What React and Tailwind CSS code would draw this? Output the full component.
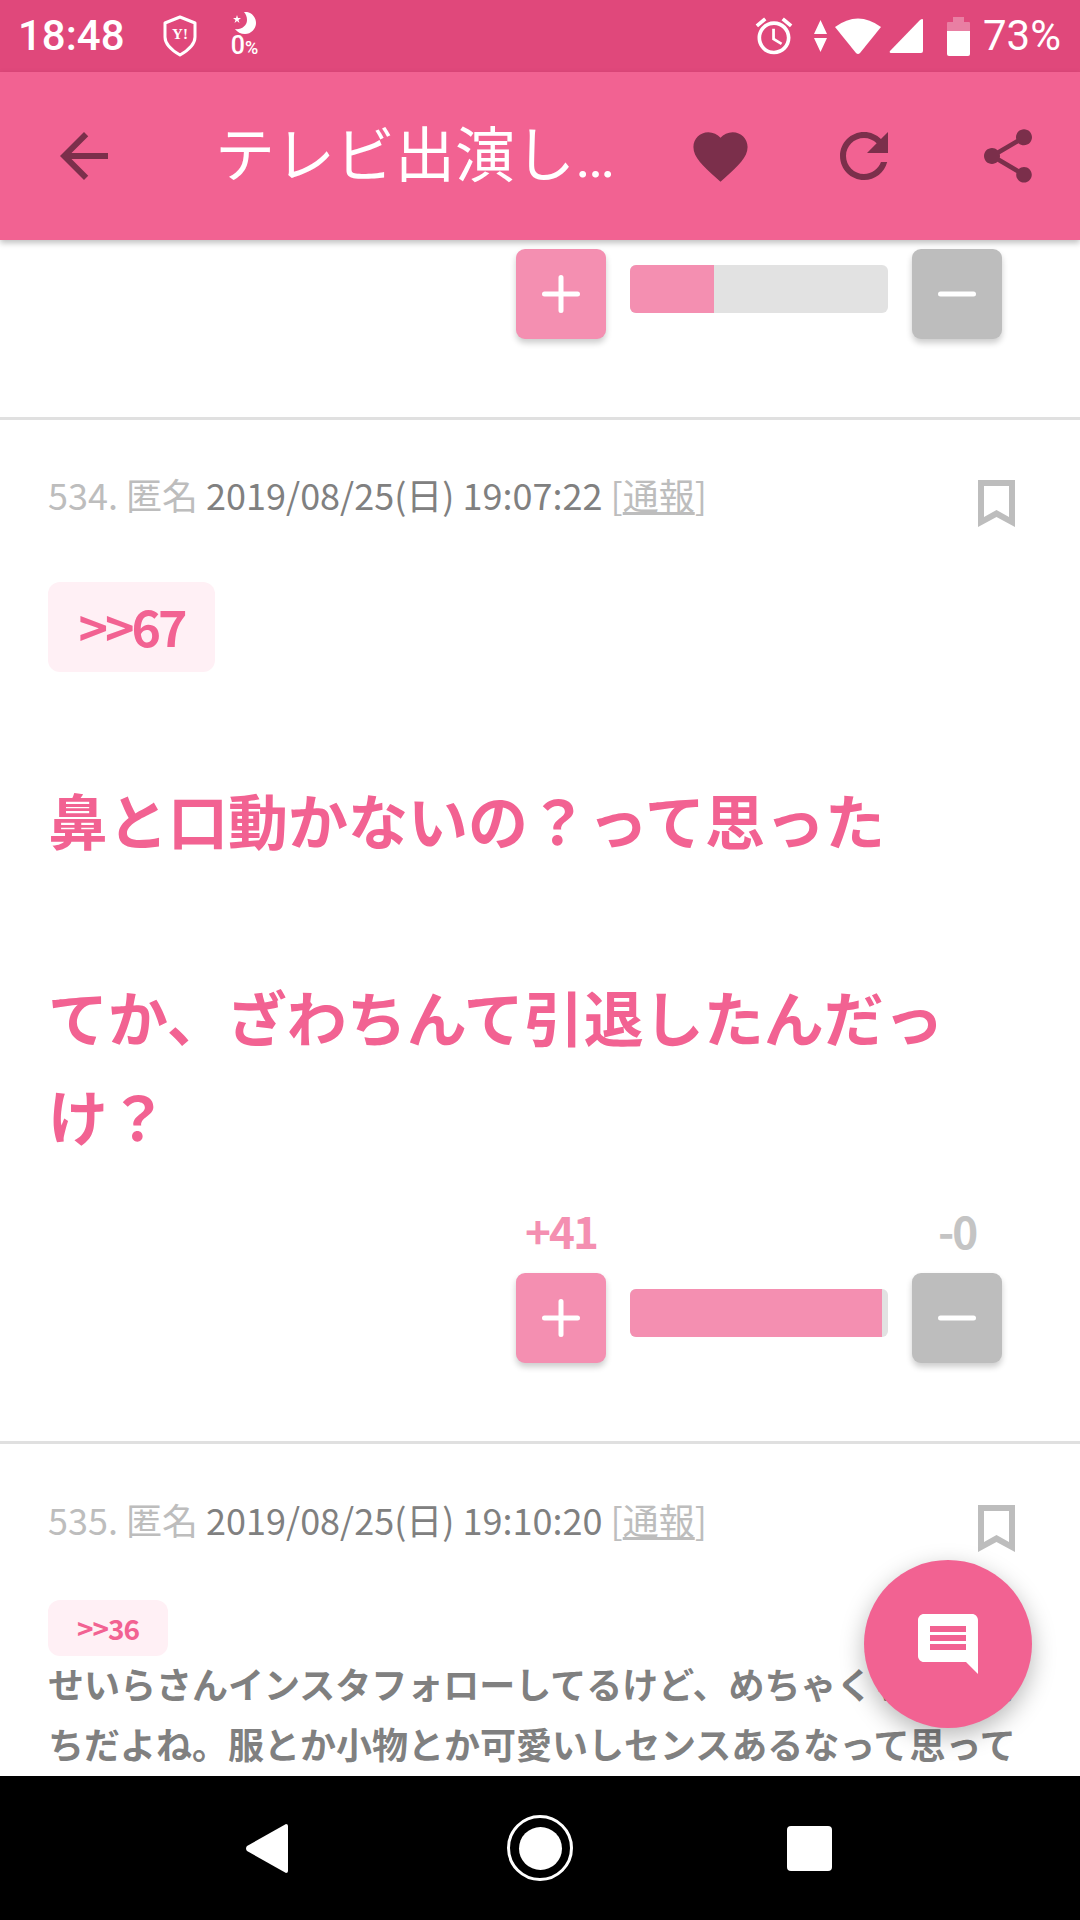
import React from 'react';

const cjk = 'font-["Noto_Sans_CJK_JP",sans-serif]';

function VoteRow({ plus, minus, fillClass }) {
  return (
    <div className="pl-[516px]">
      {plus && (
        <div className="w-[486px] flex justify-between mb-[22px] h-[42px] text-[44px] leading-[42px] font-bold tracking-[-2px] text-center">
          <span className="w-[90px] text-[#f48fb1]">{plus}</span>
          <span className="w-[90px] text-[#c4c4c4]">{minus}</span>
        </div>
      )}
      <div className="flex items-start gap-[24px]">
        <button className="w-[90px] h-[90px] rounded-[9px] bg-[#f48fb1] shadow-[0_4px_6px_rgba(0,0,0,0.2)] flex items-center justify-center">
          <svg width="40" height="40" viewBox="0 0 40 40" stroke="#fff" strokeWidth="5" strokeLinecap="round">
            <path d="M3.5 20H36.5M20 3.5V36.5" />
          </svg>
        </button>
        <div className="mt-[16px] w-[258px] h-[48px] rounded-[6px] bg-[#e2e2e2] overflow-hidden">
          <div className={`h-full bg-[#f48fb1] ${fillClass}`} />
        </div>
        <button className="w-[90px] h-[90px] rounded-[9px] bg-[#bdbdbd] shadow-[0_4px_6px_rgba(0,0,0,0.2)] flex items-center justify-center">
          <svg width="40" height="40" viewBox="0 0 40 40" stroke="#fff" strokeWidth="5" strokeLinecap="round">
            <path d="M3.5 20H36.5" />
          </svg>
        </button>
      </div>
    </div>
  );
}

function PostHeader({ no, date }) {
  return (
    <div className="flex justify-between items-start pl-[48px] pr-[65px]">
      <p className="-mt-[3px] text-[36px] leading-[48px] text-[#bdbdbd] whitespace-nowrap">
        {no}. 匿名 <span className="text-[#808080]">{date}</span> [<span className="underline">通報</span>]
      </p>
      <svg className="mt-[7px]" width="37" height="47" viewBox="0 0 37 47" fill="#bdbdbd">
        <path fillRule="evenodd" d="M0 0H37V47L18.5 37L0 47ZM6 6V37L18.5 30L31 37V6Z" />
      </svg>
    </div>
  );
}

function StatusBar() {
  return (
    <div className="h-[72px] bg-[#e0487b] flex items-center justify-between text-white shrink-0 font-['Roboto',sans-serif]">
      <div className="flex items-center">
        <span className="ml-[18px] text-[42px] font-medium leading-none">18:48</span>
        <svg className="ml-[38px]" width="34" height="42" viewBox="0 0 34 42" fill="none">
          <path d="M2 8L17 2L32 8V22C32 30 24 36 17 40C10 36 2 30 2 22Z" stroke="#fff" strokeWidth="3" strokeLinejoin="round" />
          <text x="17" y="24" textAnchor="middle" fill="#fff" fontSize="15" fontWeight="700" fontFamily="Liberation Serif">Y!</text>
        </svg>
        <div className="ml-[33px] w-[30px] flex flex-col items-center">
          <svg width="24" height="22" viewBox="0 0 24 22" fill="#fff">
            <path d="M11 0C17 -1 23 4 23 11C23 17 18 22 12 22C8 22 4 20 2 17C8 18 14 14 14 8C14 5 13 2 11 0Z" />
            <path d="M4 3L5 6L8 6L5.5 8L6.5 11L4 9L1.5 11L2.5 8L0 6L3 6Z" />
          </svg>
          <span className="text-[25px] font-medium leading-[24px] whitespace-nowrap">0<span className="text-[18px]">%</span></span>
        </div>
      </div>
      <div className="flex items-center pr-[19px]">
        <svg width="44" height="44" viewBox="0 0 24 24" fill="#fff">
          <path d="M22 5.72l-4.6-3.86-1.29 1.53 4.6 3.86L22 5.72zM7.88 3.39L6.6 1.86 2 5.71l1.29 1.53 4.59-3.85zM12.5 8H11v6l4.75 2.85.75-1.23-4-2.37V8zM12 4c-4.97 0-9 4.03-9 9s4.03 9 9 9 9-4.03 9-9-4.03-9-9-9zm0 16c-3.87 0-7-3.13-7-7s3.13-7 7-7 7 3.13 7 7-3.13 7-7 7z" />
        </svg>
        <svg className="ml-[18px]" width="13" height="32" viewBox="0 0 13 32" fill="#fff">
          <path d="M6.5 0L13 14H0ZM0 18H13L6.5 32Z" />
        </svg>
        <svg className="ml-[8px]" width="46" height="37" viewBox="0 0 46 37" fill="#fff">
          <path d="M0 9Q23 -8 46 9L25 35Q23 37 21 35Z" />
        </svg>
        <svg className="ml-[8px]" width="34" height="34" viewBox="0 0 34 34" fill="#fff">
          <path d="M34 1V32Q34 34 32 34H2Q0 34 1 32L31 1Q34 -1 34 1Z" />
        </svg>
        <svg className="ml-[24px]" width="23" height="39" viewBox="0 0 23 39" fill="#fff">
          <path opacity="0.3" d="M6 0H17V5H22Q23 5 23 6V14H0V6Q0 5 1 5H6Z" />
          <path d="M0 14H23V37Q23 39 21 39H2Q0 39 0 37Z" />
        </svg>
        <span className="ml-[13px] text-[42px] leading-none">73%</span>
      </div>
    </div>
  );
}

function AppBar() {
  const btn = 'w-[144px] h-full flex items-center justify-center shrink-0';
  return (
    <div className="relative z-10 h-[168px] bg-[#f26292] flex items-center shrink-0 pl-[12px] shadow-[0_3px_6px_rgba(0,0,0,0.25)]">
      <div className={btn}>
        <svg width="72" height="72" viewBox="0 0 24 24" fill="#7b2f4b">
          <path d="M20 11H7.83l5.59-5.59L12 4l-8 8 8 8 1.41-1.41L7.83 13H20v-2z" />
        </svg>
      </div>
      <div className="flex-1 pl-[59px] pt-[2px] text-white text-[60px] leading-none whitespace-nowrap font-['Roboto','Noto_Sans_CJK_JP',sans-serif]">
        テレビ出演し…
      </div>
      <div className={btn}>
        <svg width="65" height="65" viewBox="0 0 24 24" fill="#7b2f4b">
          <path d="M12 21.35l-1.45-1.32C5.4 15.36 2 12.28 2 8.5 2 5.42 4.42 3 7.5 3c1.74 0 3.41.81 4.5 2.09C13.09 3.81 14.76 3 16.5 3 19.58 3 22 5.42 22 8.5c0 3.78-3.4 6.86-8.55 11.54L12 21.35z" />
        </svg>
      </div>
      <div className={btn}>
        <svg width="72" height="72" viewBox="0 0 24 24" fill="#7b2f4b">
          <path d="M17.65 6.35C16.2 4.9 14.21 4 12 4c-4.42 0-7.99 3.58-7.99 8s3.57 8 7.99 8c3.73 0 6.84-2.55 7.73-6h-2.08c-.82 2.33-3.04 4-5.65 4-3.31 0-6-2.69-6-6s2.69-6 6-6c1.66 0 3.14.69 4.22 1.78L13 11h7V4l-2.35 2.35z" />
        </svg>
      </div>
      <div className={btn}>
        <svg width="64" height="64" viewBox="0 0 24 24" fill="#7b2f4b">
          <path d="M18 16.08c-.76 0-1.44.3-1.96.77L8.91 12.7c.05-.23.09-.46.09-.7s-.04-.47-.09-.7l7.05-4.11c.54.5 1.25.81 2.04.81 1.66 0 3-1.34 3-3s-1.34-3-3-3-3 1.34-3 3c0 .24.04.47.09.7L8.04 9.81C7.5 9.31 6.79 9 6 9c-1.66 0-3 1.34-3 3s1.34 3 3 3c.79 0 1.5-.31 2.04-.81l7.12 4.16c-.05.21-.08.43-.08.65 0 1.61 1.31 2.92 2.92 2.92 1.61 0 2.92-1.31 2.92-2.92s-1.31-2.92-2.92-2.92z" />
        </svg>
      </div>
    </div>
  );
}

export default function App() {
  return (
    <div className={`relative w-[1080px] h-[1920px] bg-white flex flex-col overflow-hidden ${cjk}`}>
      <StatusBar />
      <AppBar />

      <div className="flex-1 overflow-hidden">
        {/* end of post 533 */}
        <div className="pt-[9px] pb-[78px] border-b-[3px] border-[#e0e0e0]">
          <VoteRow fillClass="w-[84px]" />
        </div>

        <div className="pt-[53px] pb-[78px] border-b-[3px] border-[#e0e0e0]">
          <PostHeader no="534" date="2019/08/25(日) 19:07:22" />
          <div className="ml-[48px] mt-[55px] w-[167px] h-[90px] pb-[4px] rounded-[12px] bg-[#fff0f5] flex items-center justify-center text-[50px] font-bold tracking-[-3px] text-[#f26292]">
            &gt;&gt;67
          </div>
          <p className="mt-[98px] px-[48px] text-[60px] leading-[98.5px] font-bold text-[#f26292]">
            鼻と口動かないの？って思った
            <br />
            <br />
            てか、ざわちんて引退したんだっけ？
          </p>
          <div className="mt-[45px]">
            <VoteRow plus="+41" minus="-0" fillClass="w-[252px]" />
          </div>
        </div>

        <div className="pt-[54px]">
          <PostHeader no="535" date="2019/08/25(日) 19:10:20" />
          <div className="ml-[48px] mt-[48px] w-[120px] h-[56px] rounded-[12px] bg-[#fff0f5] flex items-center justify-center text-[28px] font-bold tracking-[-1px] text-[#f26292]">
            &gt;&gt;36
          </div>
          <p className="-mt-[3px] px-[48px] text-[36px] leading-[60px] font-bold text-[#808080]">
            せいらさんインスタフォローしてるけど、めちゃくちゃ金持ちだよね。服とか小物とか可愛いしセンスあるなって思って
          </p>
        </div>
      </div>

      <div className="h-[144px] pr-[2px] bg-black shrink-0 flex items-center justify-center relative z-10">
        <svg className="mr-[219px]" width="42" height="49" viewBox="0 0 42 49" fill="#fff">
          <path d="M40 0Q42 0 42 2V47Q42 49 40 49L1 27Q-1 24.5 1 22Z" />
        </svg>
        <div className="w-[66px] h-[66px] rounded-full border-[3px] border-white flex items-center justify-center">
          <div className="w-[43px] h-[43px] rounded-full bg-white" />
        </div>
        <div className="ml-[214px] w-[45px] h-[45px] rounded-[4px] bg-white" />
      </div>

      {/* reply button */}
      <button className="absolute z-20 left-[864px] top-[1560px] w-[168px] h-[168px] rounded-full bg-[#f26292] shadow-[0_8px_24px_rgba(0,0,0,0.28)] flex items-center justify-center">
        <svg width="72" height="72" viewBox="0 0 24 24" fill="#fff">
          <path d="M21.99 4c0-1.1-.89-2-1.99-2H4c-1.1 0-2 .9-2 2v12c0 1.1.9 2 2 2h14l4 4-.01-18zM18 14H6v-2h12v2zm0-3H6V9h12v2zm0-3H6V6h12v2z" />
        </svg>
      </button>
    </div>
  );
}
